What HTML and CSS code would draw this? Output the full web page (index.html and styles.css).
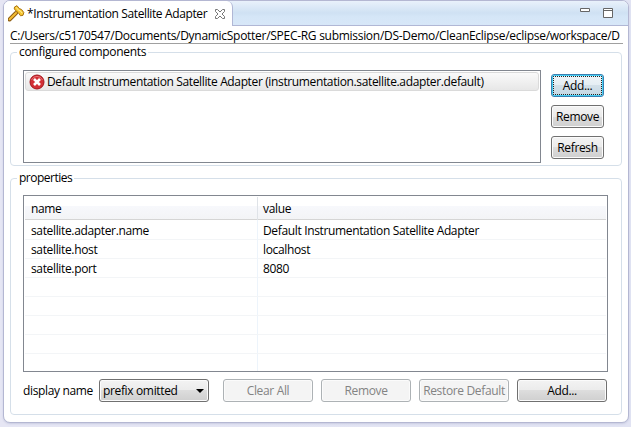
FILE: index.html
```
<!DOCTYPE html>
<html lang="en">
<head>
<meta charset="utf-8">
<title>Instrumentation Satellite Adapter</title>
<link rel="stylesheet" href="styles.css">
</head>
<body>
<main class="editor">
  <header class="tabbar">
    <div class="tab">
      <svg class="tool" width="17" height="17" viewBox="0 0 17 17">
        <path d="M1.500 14.500 8 8" stroke="#8d5c12" stroke-width="4" stroke-linecap="round"/>
        <path d="M1.700 14.200 8 8" stroke="#f4bd35" stroke-width="2" stroke-linecap="round"/>
        <path d="M6.500 2 9 .7l2.200 2.800 2.400 1 2.200 3-.8 2.800-2.500.5-2.200-3.100-2-1.500-2-2.300z" fill="#f8c62e" stroke="#a97310"/>
        <path d="m8.200 2.300 2 2.600 2.800 1.500 1.200 2" fill="none" stroke="#fff0a0"/>
      </svg>
      <span class="title">*Instrumentation Satellite Adapter</span>
      <svg class="close" width="12" height="12" viewBox="0 0 12 12"><path d="M1.500 1.500h2L6 4l2.500-2.500h2v2L8 6l2.500 2.500v2h-2L6 8l-2.500 2.500h-2v-2L4 6 1.500 3.500z" fill="#fff" stroke="#777"/></svg>
    </div>
    <div class="window">
      <svg width="10" height="4" viewBox="0 0 10 4"><path d="M.5.5h9v3h-9z" fill="#fff" stroke="#666"/></svg>
      <svg width="10" height="10" viewBox="0 0 10 10"><path d="M.5.5h9v9h-9zM.5 2.500h9" fill="#fff" stroke="#666"/></svg>
    </div>
  </header>
  <div class="path"><span>C:/Users/c5170547/Documents/DynamicSpotter/SPEC-RG submission/DS-Demo/CleanEclipse/eclipse/workspace/D</span></div>

  <fieldset class="group components">
    <legend>configured components</legend>
    <div class="list">
      <div class="item">
        <svg width="16" height="16" viewBox="0 0 16 16">
          <circle cx="8" cy="8" r="7" fill="#d22f35" stroke="#a5161d"/>
          <path d="M2.500 6a6 6 0 0 1 11 0" fill="none" stroke="#ea7578"/>
          <path d="m5 5 6 6m0-6-6 6" stroke="#fff" stroke-width="2.600"/>
        </svg>
        <span>Default Instrumentation Satellite Adapter (instrumentation.satellite.adapter.default)</span>
      </div>
    </div>
    <div class="stack">
      <button class="btn focus">Add...</button>
      <button class="btn">Remove</button>
      <button class="btn">Refresh</button>
    </div>
  </fieldset>

  <fieldset class="group properties">
    <legend>properties</legend>
    <div class="table">
      <div class="row head"><div>name</div><div>value</div></div>
      <div class="row"><div>satellite.adapter.name</div><div>Default Instrumentation Satellite Adapter</div></div>
      <div class="row"><div>satellite.host</div><div>localhost</div></div>
      <div class="row"><div>satellite.port</div><div>8080</div></div>
      <div class="row"><div></div><div></div></div>
      <div class="row"><div></div><div></div></div>
      <div class="row"><div></div><div></div></div>
      <div class="row"><div></div><div></div></div>
      <div class="row last"><div></div><div></div></div>
    </div>
    <div class="actions">
      <span class="label">display name</span>
      <button class="btn select"><span>prefix omitted</span><svg width="8" height="4" viewBox="0 0 8 4"><path d="M0 0h8L4 4z"/></svg></button>
      <button class="btn" disabled>Clear All</button>
      <button class="btn" disabled>Remove</button>
      <button class="btn" disabled>Restore Default</button>
      <button class="btn">Add...</button>
    </div>
  </fieldset>
</main>
</body>
</html>
```
FILE: styles.css
```
* { box-sizing: border-box; }
body {
  margin: 0;
  height: 427px;
  overflow: hidden;
  background: linear-gradient(90deg, #e6e6f4, #e1e3f3);
  font: 12px/16px "Open Sans", "Noto Sans", sans-serif;
  letter-spacing: -0.35px;
  color: #000;
}
svg { display: block; flex: none; fill: none; }
span { white-space: nowrap; }
.editor {
  margin: 0 2px 0 3px;
  height: 423px;
  border: 1px solid #b4b7d2;
  border-radius: 7px;
  background: #fff;
  overflow: hidden;
  box-shadow: 0 1px 2px #c9cce2;
}
.tabbar {
  display: flex;
  justify-content: space-between;
  height: 25px;
  border-bottom: 1px solid #b0b7d5;
  background: linear-gradient(#e9f1fb, #cfe1f3 50%, #d5e6f7 65%, #d7e7f8);
}
.tab {
  display: flex;
  align-items: center;
  width: 229px;
  height: 25px;
  padding-left: 4px;
  border-right: 1px solid #b0b7d5;
  border-radius: 0 6px 0 0;
  background: #fff;
}
.title { width: 180px; margin: 1px 6px 0 2px; letter-spacing: -0.38px; }
.close { margin-left: 1px; }
.window { display: flex; gap: 13px; padding: 7px 15px 0 0; }
.path {
  height: 18px;
  margin: 0 5px 0 6px;
  border-bottom: 1px solid #a0a0a0;
  line-height: 20px;
  letter-spacing: -0.285px;
  overflow: hidden;
}
.group {
  min-width: 0;
  margin: 0 6px;
  border: 1px solid #d5dfe9;
  border-radius: 4px;
}
.group legend { height: 16px; padding: 0 2px; margin-left: -6px; }
.components {
  display: flex;
  gap: 10px;
  height: 122px;
  padding: 10px 0 0 12px;
}
.components legend { letter-spacing: -0.3px; }
.properties legend { letter-spacing: -0.5px; }
.list {
  flex: none;
  width: 518px;
  height: 93px;
  border: 1px solid #828790;
  padding: 1px;
}
.item {
  display: flex;
  align-items: center;
  gap: 2px;
  height: 19px;
  padding-left: 3px;
  border: 1px solid #dadada;
  border-radius: 3px;
  background: linear-gradient(#fafafa, #e7e7e7);
  letter-spacing: -0.365px;
}
.stack { display: flex; flex-direction: column; gap: 8px; padding-top: 4px; }
.btn {
  height: 23px;
  width: 53px;
  padding: 0;
  border: 1px solid #707070;
  border-radius: 3px;
  background: linear-gradient(#f3f3f3, #ebebeb 50%, #dddddd 50%, #cfcfcf);
  box-shadow: inset 0 0 0 1px #fbfbfb;
  font: inherit;
  letter-spacing: inherit;
  color: #000;
  white-space: nowrap;
}
.focus {
  border-color: #3c7fb1;
  background: linear-gradient(#f0f5f8, #e4edf3 50%, #d3e0e9 50%, #c5d8e4);
  box-shadow: inset 0 0 0 1px #45d0f5;
  outline: 1px dotted #222;
  outline-offset: -3px;
}
.btn:disabled { border-color: #adb2b5; background: #f4f4f4; color: #838383; }
.properties { height: 245px; margin-top: 4px; padding: 9px 12px 0; }
.table {
  width: 585px;
  height: 177px;
  border: 1px solid #828790;
  padding: 1px;
  overflow: hidden;
}
.row {
  display: grid;
  grid-template-columns: 233px 1fr;
  height: 19px;
  border-bottom: 1px solid #f3f5f7;
  line-height: 20px;
}
.row > div { height: 100%; padding-left: 6px; }
.row > div:first-child { border-right: 1px solid #edf4fb; }
.row > div:last-child { padding-left: 5px; }
.head {
  height: 23px;
  border-bottom-color: #d5d5d5;
  background: linear-gradient(#fff 40%, #f7f8fc 42%, #f3f4f6);
  line-height: 24px;
}
.head > div:first-child { border-right-color: #dfe3e8; }
.head + .row { height: 20px; line-height: 22px; }
.last { border-bottom: 0; }
.actions { display: flex; align-items: center; gap: 8px; padding-top: 7px; }
.actions .btn { flex: none; width: 90px; }
.label { flex: none; width: 68px; }
.actions .select {
  display: flex;
  align-items: center;
  justify-content: space-between;
  width: 110px;
  margin-right: 6px;
  padding: 0 4px 0 3px;
}
.select svg { fill: #000; }
```
